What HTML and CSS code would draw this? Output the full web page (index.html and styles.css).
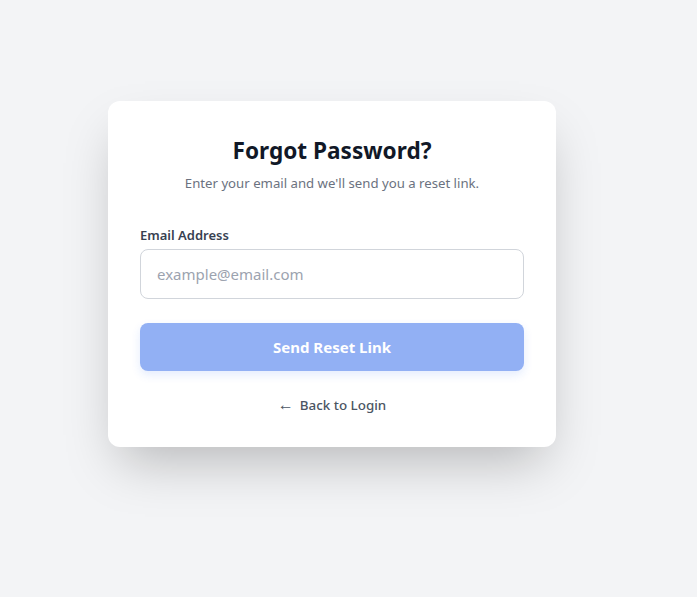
FILE: index.html
```html
<!DOCTYPE html>
<html lang="en">
<head>
    <meta charset="UTF-8">
    <meta name="viewport" content="width=device-width, initial-scale=1.0">
    <title>Forgot Password</title>
    <link rel="stylesheet" href="styles.css">
</head>
<body>
    <div class="card">
        <h1 class="title">Forgot Password?</h1>
        <p class="subtitle">Enter your email and we'll send you a reset link.</p>

        <form class="form">
            <label class="label" for="email">Email Address</label>
            <input class="input" id="email" type="email" placeholder="example@email.com">
            <button class="button" type="button">Send Reset Link</button>
        </form>

        <div class="back">
            <a class="back-link" href="#"><span class="arrow">&larr;</span> Back to Login</a>
        </div>
    </div>
</body>
</html>
```

FILE: styles.css
```css
body {
    background-color: #f3f4f6;
    margin: 0;
    padding: 101px 0 0 108px;
    font-family: 'Noto Sans', sans-serif;
    height: 100vh;
    box-sizing: border-box;
}

.card {
    width: 448px;
    box-sizing: border-box;
    background: #ffffff;
    border-radius: 12px;
    padding: 32px;
    box-shadow: 0 25px 50px -12px rgba(0, 0, 0, 0.25);
    text-align: center;
}

.title {
    font-size: 22.6px;
    line-height: 32px;
    font-weight: 700;
    color: #111827;
    margin: 2px 0 6px;
}

.subtitle {
    font-size: 13.2px;
    line-height: 20px;
    color: #6b7280;
    margin: 0 0 32px;
}

.form {
    display: flex;
    flex-direction: column;
    text-align: left;
}

.label {
    font-size: 13px;
    line-height: 20px;
    font-weight: 600;
    color: #374151;
    margin-bottom: 4px;
}

.input {
    height: 50px;
    box-sizing: border-box;
    border: 1px solid #d1d5db;
    border-radius: 8px;
    padding: 0 16px;
    font-family: inherit;
    font-size: 15px;
    color: #111827;
    outline: none;
}

.input::placeholder {
    color: #9ca3af;
}

.button {
    margin-top: 24px;
    height: 48px;
    border: none;
    border-radius: 8px;
    background: #92b0f4;
    color: #ffffff;
    font-family: inherit;
    font-size: 15px;
    font-weight: 700;
    box-shadow: 0 4px 10px rgba(37, 99, 235, 0.12);
}

.back {
    display: flex;
    justify-content: center;
    margin-top: 24px;
    height: 20px;
}

.back-link {
    display: flex;
    align-items: center;
    gap: 6px;
    font-size: 13.4px;
    font-weight: 500;
    color: #4b5563;
    text-decoration: none;
}

.arrow {
    font-size: 16px;
    line-height: 1;
    margin-top: -2px;
}
```
